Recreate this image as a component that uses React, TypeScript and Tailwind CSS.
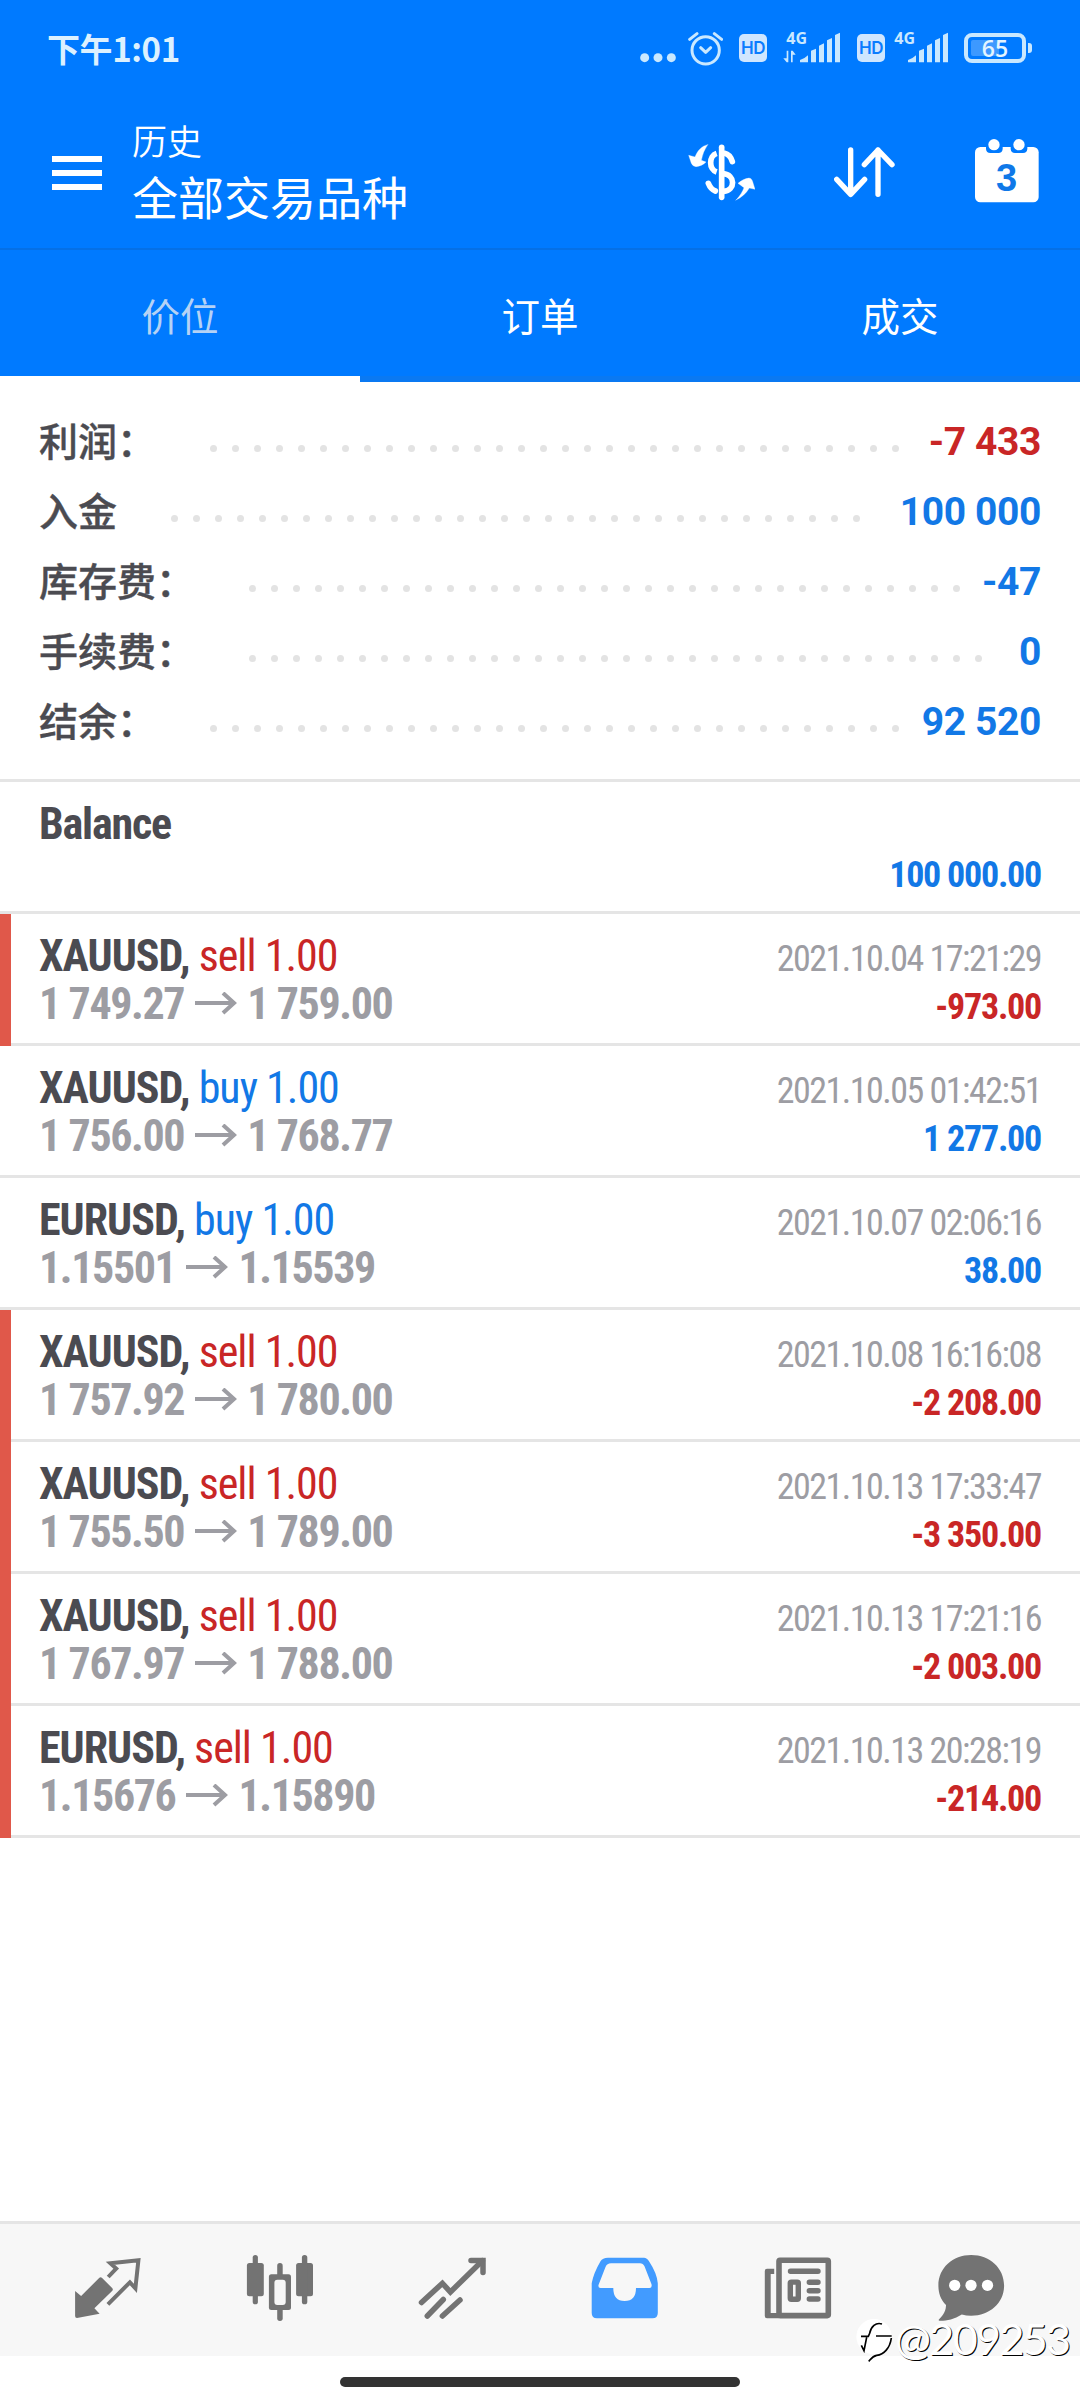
import type { ReactNode } from 'react'

type Side = 'buy' | 'sell'

interface Deal {
    symbol: string
    side: Side
    volume: string
    open: string
    close: string
    time: string
    profit: string
}

const summary = [
    { label: '利润：', value: '-7 433', dots: 32, negative: true },
    { label: '入金', value: '100 000', dots: 32, negative: false },
    { label: '库存费：', value: '-47', dots: 33, negative: false },
    { label: '手续费：', value: '0', dots: 34, negative: false },
    { label: '结余：', value: '92 520', dots: 32, negative: false },
]

const deals: Deal[] = [
    { symbol: 'XAUUSD', side: 'sell', volume: '1.00', open: '1 749.27', close: '1 759.00', time: '2021.10.04 17:21:29', profit: '-973.00' },
    { symbol: 'XAUUSD', side: 'buy', volume: '1.00', open: '1 756.00', close: '1 768.77', time: '2021.10.05 01:42:51', profit: '1 277.00' },
    { symbol: 'EURUSD', side: 'buy', volume: '1.00', open: '1.15501', close: '1.15539', time: '2021.10.07 02:06:16', profit: '38.00' },
    { symbol: 'XAUUSD', side: 'sell', volume: '1.00', open: '1 757.92', close: '1 780.00', time: '2021.10.08 16:16:08', profit: '-2 208.00' },
    { symbol: 'XAUUSD', side: 'sell', volume: '1.00', open: '1 755.50', close: '1 789.00', time: '2021.10.13 17:33:47', profit: '-3 350.00' },
    { symbol: 'XAUUSD', side: 'sell', volume: '1.00', open: '1 767.97', close: '1 788.00', time: '2021.10.13 17:21:16', profit: '-2 003.00' },
    { symbol: 'EURUSD', side: 'sell', volume: '1.00', open: '1.15676', close: '1.15890', time: '2021.10.13 20:28:19', profit: '-214.00' },
]

const tabs = ['价位', '订单', '成交']

function HdBadge() {
    return (
        <span className="flex size-7 items-center justify-center rounded-[5px] bg-[#cfe6ff] font-['Inter'] text-[17px] font-semibold leading-none tracking-[-0.5px] text-[#0a7cff]">
            HD
        </span>
    )
}

function Signal({ data }: { data?: boolean }) {
    return (
        <svg className="mb-1.5" width="58" height="40" viewBox="0 -18 174 120" fill="#c9e8ff">
            <text x="10" y="38" fontFamily="Open Sans, sans-serif" fontWeight="700" fontSize="48">4G</text>
            {data && <path d="M11 94V59h5v35zM11 94L1 82h10zM24 94V59h5v35zM29 59l9 12h-9z" />}
            <path d="M51 94v-7q14-4 24-14v21zM84 94V59l15-6v41zM108 94V44l15-7v57zM132 94V28l15-7v73zM156 94V12l15-7v89z" />
        </svg>
    )
}

function StatusBar() {
    return (
        <div className="flex h-24 items-center justify-between pl-[47px] pr-[48px]">
            <span className="font-['Noto_Sans_CJK_SC'] text-[33px] font-bold leading-none tracking-[-0.4px] text-[#dcf1ff]">下午1:01</span>
            <div className="flex items-center">
                <svg className="mr-3" width="36" height="34" viewBox="0 0 108 102" fill="#c9e8ff">
                    <circle cx="14" cy="80" r="13.5" />
                    <circle cx="54" cy="80" r="13.5" />
                    <circle cx="94" cy="80" r="13.5" />
                </svg>
                <svg className="mr-4" width="35" height="35" viewBox="0 0 105 105" fill="none" stroke="#c9e8ff" strokeWidth="9" strokeLinecap="round">
                    <circle cx="53" cy="58" r="41" />
                    <path d="M5 25L27 8M79 8l22 17" />
                    <path d="M38 50l15 14 15-14" strokeLinejoin="round" />
                </svg>
                <HdBadge />
                <span className="ml-4 mr-4"><Signal data /></span>
                <HdBadge />
                <span className="ml-1.5 mr-[15px]"><Signal /></span>
                <div className="relative flex h-[30px] w-[62px] items-center justify-center rounded-[8px] border-4 border-[#c9e8ff] font-['Open_Sans'] text-[23px] font-semibold leading-none text-[#e4f5ff]">
                    <div className="absolute left-[3px] top-[3px] h-4 w-7 rounded-[2px] bg-[#3d99ff]" />
                    <span className="relative">65</span>
                </div>
                <div className="ml-0.5 h-2.5 w-1 rounded-r-[3px] bg-[#c9e8ff]" />
            </div>
        </div>
    )
}

function Header() {
    return (
        <div className="flex h-[152px] items-center pl-[52px] pr-[41px] text-white">
            <div className="flex w-[50px] flex-col gap-2 pt-0.5">
                <div className="h-1.5 bg-white" />
                <div className="h-1.5 bg-white" />
                <div className="h-1.5 bg-white" />
            </div>
            <div className="mb-[5px] ml-[30px] flex-1 font-['Noto_Sans_CJK_SC']">
                <div className="text-[35px] font-[350] leading-[50px]">历史</div>
                <div className="text-[46px] leading-[60px]">全部交易品种</div>
            </div>
            {/* Symbol filter */}
            <svg className="mr-[79px]" width="67" height="57" viewBox="265 434 201 171" fill="none" stroke="#fff" strokeLinecap="round">
                <path d="M366 444v150" strokeWidth="17" />
                <path d="M375 462q16 3 23 25" strokeWidth="17" />
                <path d="M351 462c-24 8-24 48 0 56" strokeWidth="17" strokeLinecap="butt" />
                <path d="M370 523c38 3 38 50 2 53" strokeWidth="17" />
                <path d="M326 552q7 18 21 23" strokeWidth="17" />
                <path d="M324 436c-18 4-30 17-38 37l-19-5 8 24q5 10 14 10 18-1 30-14l-14-5q4-25 19-47z" fill="#fff" />
                <path d="M409 602c14-14 21-29 24-37l-18-13q15-14 33-16 7 0 10 8l8 26-17-4q-14 24-40 36z" fill="#fff" />
            </svg>
            {/* Sort */}
            <svg className="mr-[80px]" width="61" height="51" viewBox="704 444 183 153" fill="none" stroke="#fff" strokeWidth="16" strokeLinecap="round" strokeLinejoin="round">
                <path d="M754 453v133M712 541l42 45 42-45M836 586V453M795 497l41-44 42 44" />
            </svg>
            {/* Period */}
            <svg className="mb-0.5" width="64" height="64" viewBox="1125 420 192 192">
                <rect x="1125" y="444" width="191" height="166" rx="16" fill="#fff" />
                <path d="M1158 440h50v10q-1 12-13 12h-24q-12 0-13-12zM1232 440h50v10q-1 12-13 12h-24q-12 0-13-12z" fill="#007aff" />
                <circle cx="1182" cy="437" r="17" fill="#fff" />
                <circle cx="1257" cy="437" r="17" fill="#fff" />
                <text x="1220" y="576" textAnchor="middle" fontFamily="Liberation Sans, sans-serif" fontWeight="700" fontSize="114" fill="#0f78e8">3</text>
            </svg>
        </div>
    )
}

function DealRow({ deal }: { deal: Deal }) {
    const loss = deal.profit.startsWith('-')

    return (
        <div className="flex h-[132px]">
            <div className={`w-[11px] ${loss ? 'bg-[#e0584a]' : 'bg-transparent border-b-[3px] border-[#e5e5e5]'}`} />
            <div className="flex flex-1 justify-between border-b-[3px] border-[#e5e5e5] pl-7 pr-[39px]">
                <div className="pt-[18px] text-[44px] leading-[48px] whitespace-nowrap">
                    <div>
                        <span className="font-bold tracking-[-1px] text-[#4b4b51]">{deal.symbol}, </span>
                        <span className={`tracking-[-1px] ${deal.side === 'sell' ? 'text-[#c92626]' : 'text-[#1278e6]'}`}>
                            {deal.side} {deal.volume}
                        </span>
                    </div>
                    <div className="flex items-center font-bold tracking-[-1.4px] text-[#9d9da3]">
                        <span>{deal.open}</span>
                        <svg className="ml-[11px] mr-[9px]" width="43" height="24" viewBox="0 0 43 24" fill="none" stroke="#9d9da3" strokeWidth="4">
                            <path d="M0 11h39M28 1l11 10-11 10" />
                        </svg>
                        <span>{deal.close}</span>
                    </div>
                </div>
                <div className="pt-[21px] text-right text-[36px] leading-[48px]">
                    <div className="text-[#9d9da3] tracking-[-1.5px]">{deal.time}</div>
                    <div className={`font-bold tracking-[-1.25px] ${loss ? 'text-[#c92626]' : 'text-[#1278e6]'}`}>{deal.profit}</div>
                </div>
            </div>
        </div>
    )
}

function NavItem({ children }: { children: ReactNode }) {
    return (
        <button className="flex flex-1 items-center justify-center text-[#737373]">
            <svg width="80" height="80" viewBox="0 0 80 80" fill="none">
                {children}
            </svg>
        </button>
    )
}

function BottomNav() {
    return (
        <div className="flex h-[135px] border-t-[3px] border-[#e5e5e5] bg-[#f7f7f7] px-[22px]">
            {/* Quotes */}
            <NavItem>
                <path d="M7.1 41l6 5 18-18q1.5-1.5 3 0l10 10q1.5 1.5 0 3L26.4 58.3l5.2 5.5L9 68q-1.9 0-1.9-2z" fill="currentColor" />
                <path d="M40.2 27l8-8.5-5.8-5.2 28-3-3 28-5.5-6-22 22" stroke="currentColor" strokeWidth="4" />
            </NavItem>
            {/* Charts */}
            <NavItem>
                <g fill="currentColor">
                    <rect x="5.9" y="13" width="16.9" height="33.3" rx="2.5" />
                    <rect x="11.7" y="5" width="5.2" height="49.3" rx="2.6" />
                    <rect x="55.1" y="13" width="16.9" height="33.3" rx="2.5" />
                    <rect x="60.9" y="5" width="5.4" height="49.3" rx="2.6" />
                    <rect x="27.9" y="24.3" width="22.1" height="35.7" rx="2.5" />
                    <rect x="36.2" y="13" width="5.5" height="58" rx="2.7" />
                </g>
                <rect x="33.4" y="29.7" width="11.3" height="25.3" rx="3" fill="#f7f7f7" />
            </NavItem>
            {/* Trade */}
            <NavItem>
                <g stroke="currentColor" strokeWidth="5.5" strokeLinecap="round">
                    <path d="M7.5 52.5l20.9-19.2 8 8.7 32-31.3" />
                    <path d="M57 10.5h12v12" />
                    <path d="M13.3 66l16-16.5M28.4 66L46 50" />
                </g>
            </NavItem>
            {/* History */}
            <NavItem>
                <path d="M22 7.7h36q3 0 5 3.5 8 12 8.8 22V63q0 5.3-5.3 5.3H11Q5.7 68.3 5.7 63V33.2q1.8-10 8.8-22 2-3.5 7.5-3.5z" fill="#429bff" />
                <path d="M25 13.3h29q3 0 4.5 3l7 18q.8 3.7-2 3.7H50q0 13-11.4 13T27.3 38H14.5q-2.5 0-2-3l7-18q1.5-3.7 5.5-3.7z" fill="#f7f7f7" />
            </NavItem>
            {/* News */}
            <NavItem>
                <rect x="20" y="10.3" width="49.3" height="55.3" rx="1" stroke="currentColor" strokeWidth="5.6" />
                <path d="M15.2 18.7v5.3h-3.5v39H20v5.3H8q-2.2 0-2.2-2.3V21q0-2.3 2.2-2.3z" fill="currentColor" />
                <path d="M31.5 21.3H59M50.3 32.2H59M50.3 40.7H59M50.3 49H59" stroke="currentColor" strokeWidth="5.4" strokeLinecap="round" />
                <rect x="31.3" y="32.1" width="8" height="17.2" rx="1" stroke="currentColor" strokeWidth="5.4" />
            </NavItem>
            {/* Messages */}
            <NavItem>
                <path d="M39.2 5c18.5 0 32.9 13 32.9 30.5S57.7 65.7 39.2 65.7q-5 0-9.4-1.2C22 69.5 14 71 7.5 70.8q-1.5-.3-.4-1.6C12 64.5 14 60 14 55 8.5 49.5 6.4 43 6.4 35.5 6.4 18 20.7 5 39.2 5z" fill="currentColor" />
                <g fill="#fff">
                    <circle cx="22.7" cy="35.3" r="5.6" />
                    <circle cx="39" cy="35.3" r="5.6" />
                    <circle cx="55.5" cy="35.3" r="5.6" />
                </g>
            </NavItem>
        </div>
    )
}

export default function App() {
    return (
        <div className="relative flex h-[2400px] w-[1080px] flex-col overflow-hidden bg-white font-['Roboto_Condensed','Noto_Sans_CJK_SC',sans-serif]">
            <div className="bg-[#007aff]">
                <StatusBar />
                <Header />
                <div className="flex h-[134px] border-t-2 border-[#0570e6]">
                    {tabs.map((tab, i) => (
                        <div
                            key={tab}
                            className={`flex flex-1 items-center justify-center border-b-[6px] pt-[3px] font-['Noto_Sans_CJK_SC'] text-[38.5px] ${i === 0 ? 'border-white text-[#b5d2f5]' : 'border-[#0a79f2] text-white'}`}
                        >
                            {tab}
                        </div>
                    ))}
                </div>
            </div>

            {/* Account summary */}
            <div className="h-[400px] border-b-[3px] border-[#e5e5e5] pl-[39px] pr-[39px] pt-[25px] font-['Roboto'] text-[39px]">
                {summary.map((row) => (
                    <div key={row.label} className="flex h-[70px] items-center">
                        <span className="-mt-[7px] font-['Noto_Sans_CJK_SC'] font-medium leading-[52px] text-[#4b4b51] [-webkit-text-stroke:0.4px_#4b4b51]">{row.label}</span>
                        <div className="ml-[54px] mt-[13px] flex flex-1 gap-[15px]">
                            {Array.from({ length: row.dots }, (_, i) => (
                                <span key={i} className="size-[7px] shrink-0 rounded-full bg-[#e3e3e3]" />
                            ))}
                        </div>
                        <span className={`font-bold tracking-[-0.4px] whitespace-nowrap ${row.negative ? 'text-[#c92626]' : 'text-[#1278e6]'}`}>{row.value}</span>
                    </div>
                ))}
            </div>

            {/* Deals */}
            <div className="flex h-[132px] justify-between border-b-[3px] border-[#e5e5e5] pl-[39px] pr-[39px] font-bold">
                <div className="pt-[18px] text-[44px] leading-[48px] tracking-[-1.2px] text-[#4b4b51]">Balance</div>
                <div className="pt-[69px] text-[36px] leading-[48px] tracking-[-1.25px] text-[#1278e6]">100 000.00</div>
            </div>
            {deals.map((deal) => (
                <DealRow key={deal.time} deal={deal} />
            ))}

            <div className="mt-auto">
                <BottomNav />
                <div className="flex h-11 justify-center pt-[21px]">
                    <div className="h-2.5 w-[400px] rounded-full bg-[#333]" />
                </div>
            </div>

            {/* Author stamp over the bottom bar */}
            <div className="absolute left-[855px] top-[2318px] flex items-center">
                <svg width="38" height="44" viewBox="45 35 114 132" fill="none" stroke="#000" strokeWidth="5">
                    <circle cx="102" cy="88" r="53" fill="#fff" stroke="none" />
                    <path d="M63 87h22l4-9c4-20 18-34 37-28M80 90l-8 40-8-16M108 86h47" />
                    <path d="M154 92c-4 30-22 50-44 52-12 2-17 10-24 18" />
                </svg>
                <span className="-mt-[3px] ml-0.5 font-['Lato'] text-[43px] leading-[48px] tracking-[-1.6px] text-white [text-shadow:1px_1px_0_#000]">@209253</span>
            </div>
        </div>
    )
}
